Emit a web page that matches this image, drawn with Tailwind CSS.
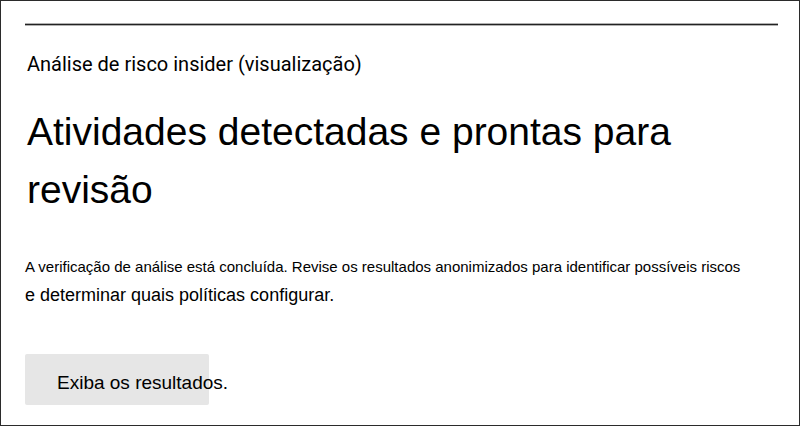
<!DOCTYPE html>
<html lang="pt-BR">
<head>
<meta charset="utf-8">
<title>Análise de risco insider</title>
<script src="https://cdn.jsdelivr.net/npm/@tailwindcss/browser@4"></script>
</head>
<body class="bg-white text-black font-['Liberation_Sans',Arial,sans-serif]">
<main class="flex min-h-screen flex-col items-start border border-[#2b2b2b] pl-6 pr-[21px] pb-5 pt-[22px]">
  <hr class="h-[3px] w-full border-y border-[#b0b0b0] bg-[#222222]">
  <p class="mt-[26px] pl-0.5 font-[Roboto,'Liberation_Sans',sans-serif] text-[20px] leading-6">Análise de risco insider (visualização)</p>
  <h1 class="mt-[27px] pl-0.5 text-[39px] leading-[58px]">Atividades detectadas e prontas para<br>revisão</h1>
  <p class="mt-[34px] text-[15px] leading-7">A verificação de análise está concluída. Revise os resultados anonimizados para identificar possíveis riscos<br><span class="text-[18px]">e determinar quais políticas configurar.</span></p>
  <button type="button" class="mt-11 h-[51px] w-[184px] whitespace-nowrap rounded-xs bg-[#e6e6e6] pl-8 pt-2 text-left text-[19px]">Exiba os resultados.</button>
</main>
</body>
</html>
